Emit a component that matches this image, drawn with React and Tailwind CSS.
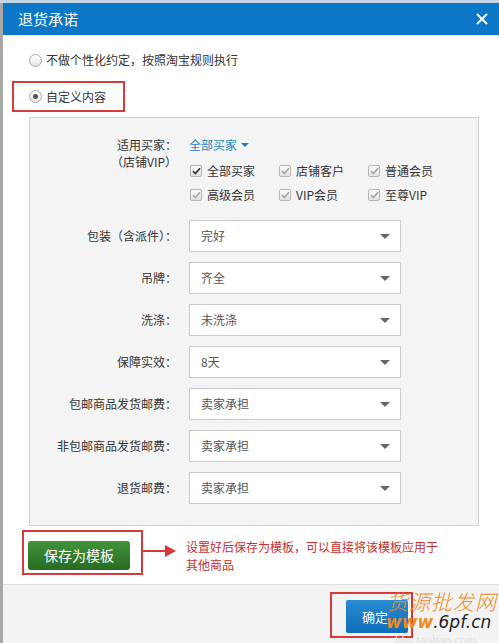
import React from "react";

const font = { fontFamily: '"Noto Sans CJK SC", "Liberation Sans", sans-serif' };

function Radio({ checked }) {
  return (
    <span className="w-[13px] h-[13px] rounded-full border border-[#a9a9a9] bg-gradient-to-b from-[#ffffff] to-[#e3e3e3] flex items-center justify-center shrink-0">
      {checked && <span className="w-[5px] h-[5px] rounded-full bg-[#555]" />}
    </span>
  );
}

function Check({ dark }) {
  return (
    <span className="w-[12px] h-[12px] border border-[#b5b5b5] bg-gradient-to-b from-[#fafafa] to-[#e2e2e2] rounded-[2px] flex items-center justify-center shrink-0">
      <svg width="9" height="8" viewBox="0 0 9 8">
        <path d="M1 4.2 L3.4 6.5 L8 1.2" fill="none" stroke={dark ? "#333" : "#a8a8a8"} strokeWidth="1.7" />
      </svg>
    </span>
  );
}

function Select({ value }) {
  return (
    <div className="w-[212px] h-[32px] bg-white border border-[#cccccc] flex items-center justify-between pl-[11px] pr-[10px] text-[12px] text-[#555]">
      <span>{value}</span>
      <span className="w-0 h-0 border-l-[5px] border-r-[5px] border-t-[5px] border-l-transparent border-r-transparent border-t-[#666]" />
    </div>
  );
}

const rows = [
  ["包装（含派件）：", "完好"],
  ["吊牌：", "齐全"],
  ["洗涤：", "未洗涤"],
  ["保障实效：", "8天"],
  ["包邮商品发货邮费：", "卖家承担"],
  ["非包邮商品发货邮费：", "卖家承担"],
  ["退货邮费：", "卖家承担"],
];

export default function App() {
  return (
    <div className="w-[499px] h-[643px] bg-[#a8a8a8] relative overflow-hidden flex flex-col" style={font}>
      <div className="h-[3px] bg-[#c6d5e4] shrink-0" />
      <div className="ml-[3px] flex-1 bg-white flex flex-col">
        {/* title bar */}
        <div className="h-[32px] bg-[#0b77c6] flex items-center justify-between pl-[15px] pr-[10px] text-white shrink-0">
          <span className="text-[15px]">退货承诺</span>
          <svg width="14" height="14" viewBox="0 0 14 14">
            <path d="M2 2 L12 12 M12 2 L2 12" stroke="#fff" strokeWidth="2" />
          </svg>
        </div>

        {/* radios */}
        <div className="flex items-center gap-[4px] ml-[26px] mt-[18px] h-[14px] text-[12px] text-[#333]">
          <Radio />
          <span>不做个性化约定，按照淘宝规则执行</span>
        </div>
        <div className="ml-[9px] mt-[14px] w-[113px] h-[31px] border-2 border-[#d8393b] flex items-center gap-[4px] pl-[15px] text-[12px] text-[#333]">
          <Radio checked />
          <span>自定义内容</span>
        </div>

        {/* panel */}
        <div className="ml-[26px] mt-[5px] w-[450px] bg-[#f4f4f4] border border-[#cfcfcf] pt-[18px] pb-[21px] text-[12px] text-[#333]">
          <div className="flex">
            <div className="w-[147px] text-right leading-[17px]">
              <div>适用买家：</div>
              <div>（店铺VIP）</div>
            </div>
            <div className="ml-[12px]">
              <div className="h-[18px] flex items-center gap-[4px] text-[#1f7fb6]">
                <span>全部买家</span>
                <span className="w-0 h-0 border-l-[4px] border-r-[4px] border-t-[4px] border-l-transparent border-r-transparent border-t-[#1f7fb6]" />
              </div>
              <div className="mt-[5px] grid grid-cols-[89px_89px_89px] ml-[1px]">
                {[
                  ["全部买家", true],
                  ["店铺客户", false],
                  ["普通会员", false],
                  ["高级会员", false],
                  ["VIP会员", false],
                  ["至尊VIP", false],
                ].map(([t, d]) => (
                  <div key={t} className="h-[24px] flex items-center gap-[5px]">
                    <Check dark={d} />
                    <span>{t}</span>
                  </div>
                ))}
              </div>
            </div>
          </div>
          <div className="mt-[13px] flex flex-col gap-[10px]">
            {rows.map(([l, v]) => (
              <div key={l} className="flex items-center">
                <div className="w-[147px] text-right">{l}</div>
                <div className="ml-[12px]">
                  <Select value={v} />
                </div>
              </div>
            ))}
          </div>
        </div>

        {/* save as template */}
        <div className="flex mt-[4px]">
          <div className="ml-[19px] w-[121px] h-[45px] border-2 border-[#d8393b] pl-[4px] pt-[9px]">
            <div className="w-[102px] h-[29px] rounded-[3px] bg-gradient-to-b from-[#43933d] to-[#286b21] text-white text-[14px] flex items-center justify-center">
              保存为模板
            </div>
          </div>
          <div className="flex items-center h-[45px] -mt-[2px]">
            <span className="w-[22px] h-[2px] bg-[#d8393b]" />
            <span className="w-0 h-0 border-t-[6px] border-b-[6px] border-l-[11px] border-t-transparent border-b-transparent border-l-[#d8393b]" />
          </div>
          <div className="ml-[10px] text-[12px] leading-[18px] text-[#c8302f] pt-[8px]">
            <div>设置好后保存为模板，可以直接将该模板应用于</div>
            <div>其他商品</div>
          </div>
        </div>

        {/* footer */}
        <div className="mt-[9px] flex-1 bg-[#f3f3f3] border-t border-[#dddddd] relative">
          <div className="absolute left-[327px] top-[7px] w-[83px] h-[46px] border-2 border-[#d8393b]" />
          <div className="absolute left-[343px] top-[15px] w-[62px] h-[33px] rounded-[2px] bg-gradient-to-b from-[#2a8bd2] to-[#0c6db8] text-white text-[13px] flex items-center pl-[16px]">
            确定
          </div>
          {/* watermark */}
          <div className="absolute left-[384px] top-[4px] text-[21px] leading-[24px] text-[#f08a1c] italic tracking-[1px]" style={{ fontFamily: '"Noto Sans CJK SC", sans-serif', fontWeight: 300 }}>
            货源批发网
          </div>
          <div className="absolute left-[383px] top-[27px] text-[17px] leading-[20px] italic" style={{ fontFamily: '"DejaVu Sans", sans-serif' }}>
            <span className="text-[#f08a1c] font-bold">www</span>
            <span className="text-[#222]">.6pf.cn</span>
          </div>
          <div className="absolute left-[392px] top-[49px] text-[13px] leading-[12px] text-[#e0e0e0]" style={{ fontFamily: '"Liberation Serif", serif' }}>
            bbs.taobao.com
          </div>
        </div>
      </div>
    </div>
  );
}
